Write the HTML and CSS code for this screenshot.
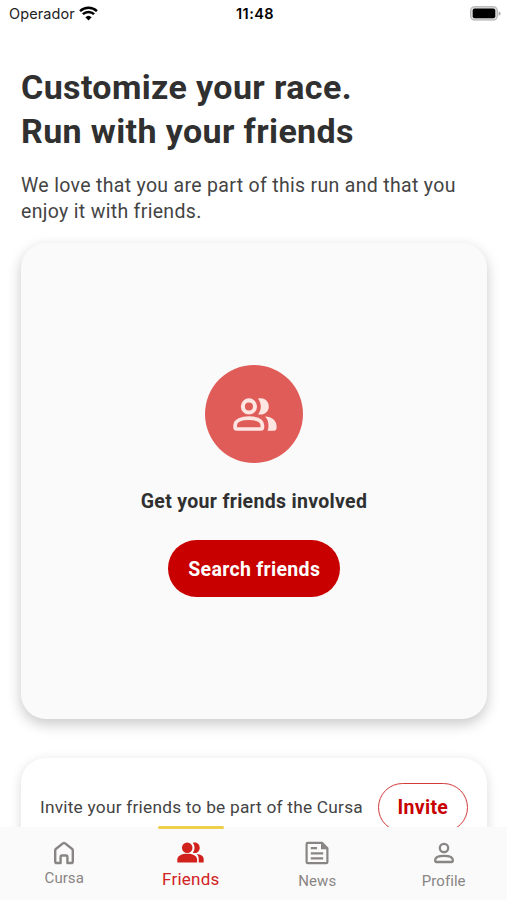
FILE: index.html
```html
<!DOCTYPE html>
<html lang="en">

<head>
    <meta charset="UTF-8">
    <meta name="viewport" content="width=device-width, initial-scale=1.0">
    <title>Cursa - Friends</title>
    <link rel="stylesheet" href="styles.css">
</head>

<body>
    <div class="status-bar">
        <div class="carrier">
            <span>Operador</span>
            <svg class="wifi" viewBox="0 0 54 42">
                <path d="M3 14 A35 35 0 0 1 51 14" fill="none" stroke="#000" stroke-width="7"/>
                <path d="M11 23 A23 23 0 0 1 43 23" fill="none" stroke="#000" stroke-width="7"/>
                <path d="M18 32 A13 13 0 0 1 36 32 L27 41 Z"/>
            </svg>
        </div>
        <span class="time">11:48</span>
        <div class="battery-wrap">
            <svg class="battery" viewBox="0 0 92 44">
                <rect x="2" y="2" width="79" height="39" rx="11" fill="#ddd" stroke="#aaa" stroke-width="3"/>
                <rect x="8" y="7" width="67" height="29" rx="6"/>
                <path d="M85 15 q6 2 6 7 q0 5 -6 7 z" fill="#aaa"/>
            </svg>
        </div>
    </div>

    <main class="content">
        <h1>Customize your race.<br>Run with your friends</h1>
        <p class="intro">We love that you are part of this run and that you enjoy it with friends.</p>

        <section class="card friends-card">
            <div class="circle">
                <svg viewBox="130 143 130 98">
                    <circle cx="177" cy="168" r="18" fill="none" stroke="currentColor" stroke-width="12"/>
                    <path d="M204 145 C220 140 236 151 236 168 C236 185 220 196 204 191 C215 178 215 158 204 145 Z" fill="currentColor"/>
                    <path d="M136 225 C136 209 156 203 177 203 C198 203 217 209 217 225 V230 Q217 235 212 235 H141 Q136 235 136 230 Z" fill="none" stroke="currentColor" stroke-width="11"/>
                    <path d="M225 198 C245 199 259 210 259 226 V233 Q259 240 252 240 H232 Q235 235 235 226 C235 214 232 205 225 198 Z" fill="currentColor"/>
                </svg>
            </div>
            <h2>Get your friends involved</h2>
            <button class="button">Search friends</button>
        </section>

        <section class="card invite-card">
            <p>Invite your friends to be part of the Cursa</p>
            <button class="button outline">Invite</button>
        </section>
    </main>

    <nav class="tab-bar">
        <a class="tab cursa">
            <svg viewBox="0 0 24 24">
                <path d="M3.2 9.2 Q3.2 8.5 3.8 8 L10.9 2.4 Q12 1.6 13.1 2.4 L20.2 8 Q20.8 8.5 20.8 9.2 V20.4 Q20.8 22 19.2 22 H15.4 V16 Q15.4 14.5 14 14.5 H10 Q8.6 14.5 8.6 16 V22 H4.8 Q3.2 22 3.2 20.4 Z" fill="none" stroke="currentColor" stroke-width="2.4" stroke-linejoin="round"/>
            </svg>
            <span>Cursa</span>
        </a>
        <a class="tab active">
            <svg class="people" viewBox="532 66 82 61">
                <circle cx="563" cy="82" r="16"/>
                <path d="M580 67 C592 63 601 71 601 82 C601 93 592 101 580 97 C587 88 587 76 580 67 Z"/>
                <path d="M533 127 V118 C533 106 547 100 563 100 C579 100 593 106 593 118 V127 Z"/>
                <path d="M592 101 C604 102 613 107 613 117 V127 H598 V118 C598 110 596 105 592 101 Z"/>
            </svg>
            <span>Friends</span>
        </a>
        <a class="tab news">
            <svg viewBox="0 0 24 24">
                <path d="M17 1.8 H2.8 Q1.6 1.8 1.6 3 V21 Q1.6 22.2 2.8 22.2 H21.2 Q22.4 22.2 22.4 21 V7.2 Z" fill="none" stroke="currentColor" stroke-width="2.2" stroke-linejoin="round"/>
                <path d="M16 1.8 V8.3 H22.6 Z"/>
                <path d="M5.8 7.2 H12 M5.8 12.3 H18.2 M5.8 17.4 H18.2" stroke="currentColor" stroke-width="2.2"/>
            </svg>
            <span>News</span>
        </a>
        <a class="tab profile">
            <svg viewBox="0 0 24 24">
                <circle cx="12" cy="7" r="4.2" fill="none" stroke="currentColor" stroke-width="2.3"/>
                <path d="M3.2 19 C3.2 16 7.5 14.8 12 14.8 C16.5 14.8 20.8 16 20.8 19 V20.1 Q20.8 21 19.9 21 H4.1 Q3.2 21 3.2 20.1 Z" fill="none" stroke="currentColor" stroke-width="2.3"/>
            </svg>
            <span>Profile</span>
        </a>
    </nav>
</body>

</html>
```
FILE: styles.css
```css
/* General Page Styles */
body {
    display: flex;
    flex-direction: column;
    height: 900px;
    margin: 0;
    font-family: Roboto, sans-serif;
    color: #303030;
    background-color: #fff;
    overflow: hidden;
}

h1,
h2,
p {
    margin: 0;
}

/* Status bar */
.status-bar {
    display: grid;
    grid-template-columns: 1fr auto 1fr;
    align-items: center;
    flex: none;
    height: 27px;
    padding: 0 6px 0 9px;
    font-family: Inter, sans-serif;
    font-size: 14.5px;
    color: #222;
}

.carrier {
    display: flex;
    align-items: center;
    gap: 4px;
}

.carrier span {
    letter-spacing: 0.1px;
}

.wifi {
    width: 19px;
    height: 15px;
}

.time {
    font-weight: 600;
    letter-spacing: 0.4px;
    color: #000;
}

.battery-wrap {
    display: flex;
    justify-content: flex-end;
}

.battery {
    width: 31px;
    height: 15px;
}

/* Layout */
.content {
    flex: 1;
    min-height: 0;
    padding: 38px 20px 0;
    overflow: hidden;
}

h1 {
    padding-left: 1px;
    font-size: 34px;
    line-height: 44px;
    font-weight: 700;
    letter-spacing: 0.38px;
}

.intro {
    margin-top: 20px;
    padding-left: 1px;
    font-size: 19.5px;
    line-height: 26px;
    letter-spacing: 0.32px;
    color: #444;
}

/* Cards */
.card {
    margin-left: 1px;
    border-radius: 25px;
    box-shadow: 0 5px 14px rgba(0, 0, 0, 0.22);
}

.friends-card {
    display: flex;
    flex-direction: column;
    align-items: center;
    height: 476px;
    margin-top: 18px;
    background-color: #fafafa;
}

.circle {
    display: flex;
    align-items: center;
    justify-content: center;
    width: 98px;
    height: 98px;
    margin-top: 122px;
    border-radius: 50%;
    background-color: #e05c59;
    color: #fde5e2;
}

.circle svg {
    width: 44px;
    height: 33px;
    margin-left: 2px;
}

h2 {
    margin-top: 26px;
    font-size: 19.5px;
    line-height: 26px;
    letter-spacing: 0.31px;
}

.button {
    height: 57px;
    margin-top: 25px;
    padding: 1px 19.5px 0 20px;
    border: none;
    border-radius: 29px;
    background-color: #c80000;
    color: #fff;
    font-family: inherit;
    font-size: 19.5px;
    font-weight: 700;
    letter-spacing: 0.31px;
    white-space: nowrap;
}

.invite-card {
    display: flex;
    align-items: center;
    justify-content: space-between;
    height: 98px;
    margin-top: 39px;
    padding: 0 19px;
    background-color: #fff;
    box-shadow: 0 3px 12px rgba(0, 0, 0, 0.15);
    white-space: nowrap;
}

.invite-card p {
    font-size: 17.3px;
    letter-spacing: 0.23px;
    color: #444;
}

.button.outline {
    height: 49px;
    margin: 0;
    padding: 0 18.8px;
    border: 1px solid #d43a3a;
    background-color: #fff;
    color: #c80000;
}

/* Bottom navigation */
.tab-bar {
    display: grid;
    grid-template-columns: repeat(4, 1fr);
    flex: none;
    height: 73px;
    padding-left: 1px;
    background-color: #fafafa;
}

.tab {
    position: relative;
    display: flex;
    flex-direction: column;
    align-items: center;
    color: #898584;
    font-size: 15px;
    line-height: 20px;
    letter-spacing: 0.05px;
}

.tab svg {
    width: 24px;
    height: 24px;
    margin-top: 14px;
    fill: currentColor;
}

.tab span {
    margin-top: 6px;
}

.cursa span {
    margin-top: 3px;
}

.tab .people {
    width: 27px;
    height: 21px;
    margin-top: 15px;
}

.active {
    color: #d1211d;
    font-size: 17px;
    letter-spacing: 0.25px;
}

/* Marker over the selected tab */
.active::before {
    content: "";
    position: absolute;
    top: -1px;
    width: 66px;
    height: 3px;
    border-radius: 2px;
    background-color: #eed04b;
}
```
